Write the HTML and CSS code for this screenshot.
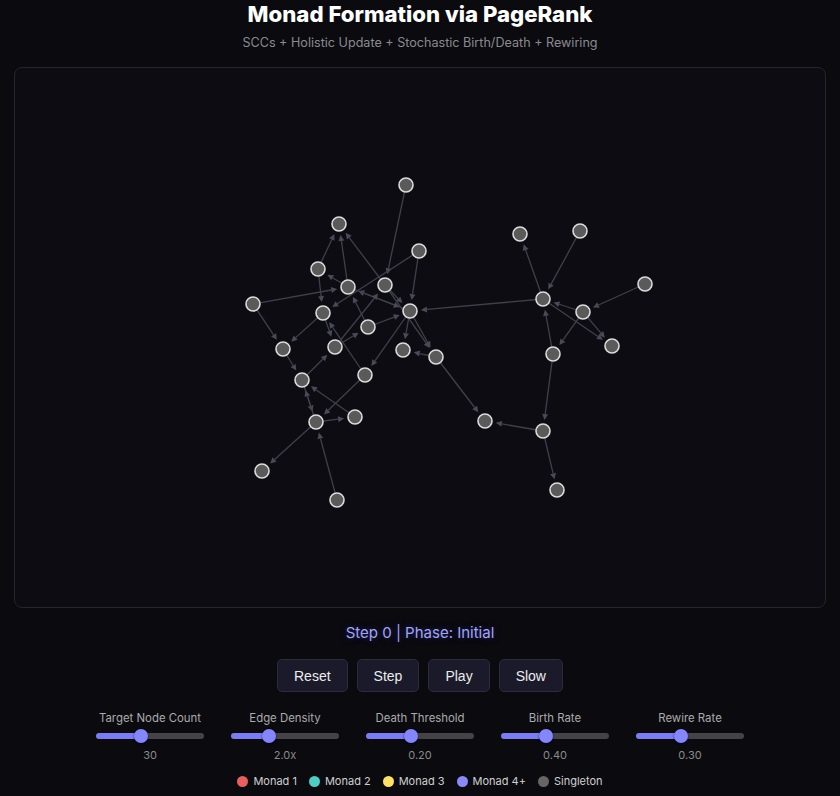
FILE: index.html
```html
<!DOCTYPE html>
<html lang="en">
<head>
<meta charset="utf-8">
<title>Monad Formation via PageRank</title>
<link rel="stylesheet" href="styles.css">
</head>
<body>
<h1 class="title">Monad Formation via PageRank</h1>
<p class="subtitle">SCCs + Holistic Update + Stochastic Birth/Death + Rewiring</p>
<div class="canvas-wrap">
  <svg id="graph" class="graph" viewBox="15 68 810 539" width="810" height="539">
    <g id="edges" class="edges"></g>
    <g id="nodes" class="nodes"></g>
  </svg>
</div>
<div class="status">Step 0 | Phase: Initial</div>
<div class="buttons">
  <button class="btn">Reset</button>
  <button class="btn">Step</button>
  <button class="btn">Play</button>
  <button class="btn">Slow</button>
</div>
<div class="controls">
  <div class="control">
    <label class="label">Target Node Count</label>
    <input class="slider" type="range" min="10" max="60" step="1" value="30" style="--p:41.3%">
    <span class="value">30</span>
  </div>
  <div class="control">
    <label class="label">Edge Density</label>
    <input class="slider" type="range" min="1" max="4" step="0.1" value="2" style="--p:35.5%">
    <span class="value">2.0x</span>
  </div>
  <div class="control">
    <label class="label">Death Threshold</label>
    <input class="slider" type="range" min="0" max="0.5" step="0.01" value="0.2" style="--p:41.3%">
    <span class="value">0.20</span>
  </div>
  <div class="control">
    <label class="label">Birth Rate</label>
    <input class="slider" type="range" min="0" max="1" step="0.01" value="0.4" style="--p:41.3%">
    <span class="value">0.40</span>
  </div>
  <div class="control">
    <label class="label">Rewire Rate</label>
    <input class="slider" type="range" min="0" max="0.75" step="0.01" value="0.3" style="--p:41.3%">
    <span class="value">0.30</span>
  </div>
</div>
<div class="legend">
  <span class="legend-item"><span class="dot dot-m1"></span>Monad 1</span>
  <span class="legend-item"><span class="dot dot-m2"></span>Monad 2</span>
  <span class="legend-item"><span class="dot dot-m3"></span>Monad 3</span>
  <span class="legend-item"><span class="dot dot-m4"></span>Monad 4+</span>
  <span class="legend-item"><span class="dot dot-single"></span>Singleton</span>
</div>
<script src="script.js"></script>
</body>
</html>
```

FILE: styles.css
```css
* { box-sizing: border-box; }

html, body {
  margin: 0;
  padding: 0;
  background: #0a0a0f;
}

body {
  font-family: Inter, "Noto Sans", "Liberation Sans", sans-serif;
  color: #e6e6e6;
  text-align: center;
}

.title {
  margin: 0;
  font-size: 22.2px;
  line-height: 28px;
  font-weight: 800;
  color: #ffffff;
}

.subtitle {
  margin: 6px 0 0;
  font-size: 12.6px;
  line-height: 18px;
  color: #8a8a8f;
}

.canvas-wrap {
  margin: 15px 14px 0;
  border: 1px solid #25252d;
  border-radius: 8px;
  background: #0c0c12;
  overflow: hidden;
}

.graph {
  display: block;
}

.edge-line {
  stroke: #40404c;
  stroke-width: 1.3;
}

.edge-head {
  fill: #4a4a57;
}

.node {
  fill: #5a5a5a;
  stroke: #dcdcdc;
  stroke-width: 1.6;
}

.status {
  margin-top: 15px;
  font-size: 15px;
  line-height: 20px;
  color: #a3a5f5;
  text-shadow: 0 0 6px rgba(60, 60, 200, 0.5);
}

.buttons {
  margin-top: 16px;
  display: flex;
  justify-content: center;
  gap: 9px;
}

.btn {
  height: 33px;
  padding: 0 16px;
  font-family: "Liberation Sans", Arial, sans-serif;
  font-size: 14px;
  color: #ececec;
  background: #1a1a2a;
  border: 1px solid #2c2c3c;
  border-radius: 5px;
}

.controls {
  margin-top: 18px;
  display: flex;
  justify-content: center;
  gap: 27px;
}

.control {
  width: 108px;
  display: flex;
  flex-direction: column;
  align-items: center;
}

.label {
  font-size: 11.4px;
  line-height: 16px;
  color: #ababab;
  white-space: nowrap;
}

.slider {
  -webkit-appearance: none;
  appearance: none;
  display: block;
  margin: 7px 0 0;
  width: 108px;
  height: 6px;
  border-radius: 3px;
  background: linear-gradient(to right, #7b7cf2 var(--p), #444448 var(--p));
  outline: none;
}

.slider::-webkit-slider-thumb {
  -webkit-appearance: none;
  appearance: none;
  width: 14px;
  height: 14px;
  border-radius: 50%;
  background: #8586fa;
  box-shadow: 0 1px 2px rgba(0, 0, 60, 0.8);
  border: none;
}

.value {
  margin-top: 9px;
  font-size: 11px;
  line-height: 14px;
  color: #8a8a8a;
}

.legend {
  margin-top: 11px;
  display: flex;
  justify-content: center;
  gap: 12px;
  font-size: 11px;
  line-height: 16px;
  color: #cfcfcf;
}

.legend-item {
  display: inline-flex;
  align-items: center;
  gap: 5px;
}

.dot {
  width: 11px;
  height: 11px;
  border-radius: 50%;
  display: inline-block;
}

.dot-m1 { background: #e85f5f; }
.dot-m2 { background: #4ecdc4; }
.dot-m3 { background: #ffe066; }
.dot-m4 { background: #8a8af7; }
.dot-single { background: #666666; }
```

FILE: script.js
```js
(function () {
  var NS = "http://www.w3.org/2000/svg";
  var nodes = [null,
    [406,185],[339,224],[419,251],[318,269],[348,287],[385,285],[253,304],[323,313],
    [410,311],[368,327],[283,349],[335,347],[403,350],[436,357],[302,380],[365,375],
    [316,422],[355,417],[262,471],[337,500],[485,421],[520,234],[580,231],[645,284],
    [543,299],[583,312],[612,346],[553,354],[543,431],[557,490]
  ];
  var edges = [
    [1,6],[4,2],[5,2],[6,2],[3,9],[3,8],[9,5],[5,9],[7,5],[4,8],[5,4],[10,5],[12,6],
    [7,11],[10,9],[25,9],[6,9],[9,13],[11,15],[15,12],[12,10],[8,11],[8,12],[16,8],
    [9,16],[16,17],[18,15],[17,18],[15,17],[17,15],[20,17],[17,19],[9,14],[6,14],
    [14,21],[14,13],[25,22],[23,25],[24,26],[26,25],[25,27],[26,27],[26,28],[28,25],
    [28,29],[29,21],[29,30]
  ];
  var eg = document.getElementById("edges");
  var ng = document.getElementById("nodes");
  edges.forEach(function (e) {
    var s = nodes[e[0]], t = nodes[e[1]];
    var dx = t[0] - s[0], dy = t[1] - s[1];
    var L = Math.sqrt(dx * dx + dy * dy);
    var ux = dx / L, uy = dy / L;
    var px = -uy, py = ux;
    var tipX = t[0] - ux * 11, tipY = t[1] - uy * 11;
    var bX = t[0] - ux * 17, bY = t[1] - uy * 17;
    var line = document.createElementNS(NS, "line");
    line.setAttribute("x1", s[0]);
    line.setAttribute("y1", s[1]);
    line.setAttribute("x2", bX.toFixed(2));
    line.setAttribute("y2", bY.toFixed(2));
    line.setAttribute("class", "edge-line");
    eg.appendChild(line);
    var head = document.createElementNS(NS, "polygon");
    head.setAttribute("points",
      tipX.toFixed(2) + "," + tipY.toFixed(2) + " " +
      (bX + px * 3).toFixed(2) + "," + (bY + py * 3).toFixed(2) + " " +
      (bX - px * 3).toFixed(2) + "," + (bY - py * 3).toFixed(2));
    head.setAttribute("class", "edge-head");
    eg.appendChild(head);
  });
  for (var i = 1; i < nodes.length; i++) {
    var c = document.createElementNS(NS, "circle");
    c.setAttribute("cx", nodes[i][0]);
    c.setAttribute("cy", nodes[i][1]);
    c.setAttribute("r", 7);
    c.setAttribute("class", "node");
    ng.appendChild(c);
  }
})();
```
